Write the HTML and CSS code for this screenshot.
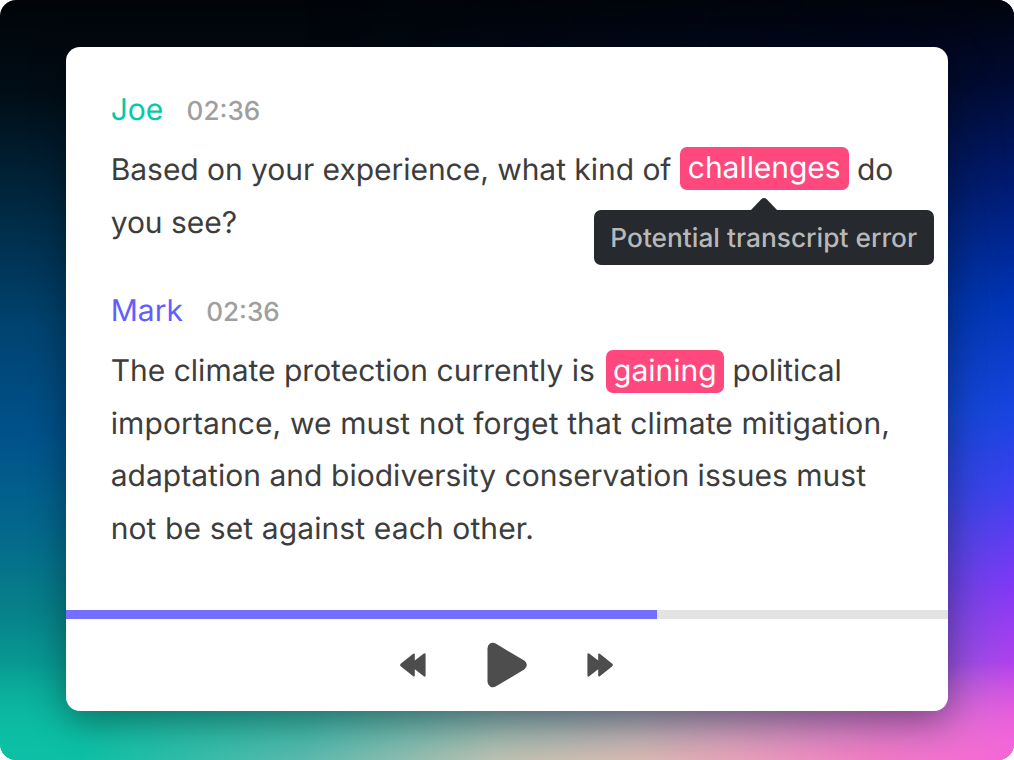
FILE: index.html
```html
<!DOCTYPE html>
<html lang="en">
<head>
    <meta charset="UTF-8">
    <meta name="viewport" content="width=device-width, initial-scale=1.0">
    <title>Transcript Player</title>
    <link rel="stylesheet" href="styles.css">
</head>
<body>

    <div class="backdrop">
        <div class="card">

            <!-- Transcript -->
            <div class="transcript">
                <section class="entry">
                    <div class="entry-header">
                        <span class="speaker joe">Joe</span>
                        <span class="time">02:36</span>
                    </div>
                    <p class="tight">Based on your experience, what kind of <span class="flag raised">challenges<span class="tooltip">Potential transcript error<svg class="arrow" width="28" height="13" viewBox="0 0 28 13"><path d="M0 13 L11 1.5 Q14 -1.4 17 1.5 L28 13 Z" fill="#26292e"/></svg></span></span> do<br>you see?</p>
                </section>

                <section class="entry">
                    <div class="entry-header">
                        <span class="speaker mark">Mark</span>
                        <span class="time">02:36</span>
                    </div>
                    <p>The climate protection currently is <span class="flag spaced">gaining</span> political<br><span class="loose">importance, we must not forget that climate mitigation,</span><br><span class="relaxed">adaptation and biodiversity conservation issues must</span><br><span class="loose">not be set against each other.</span></p>
                </section>
            </div>

            <!-- Playback progress -->
            <div class="progress">
                <div class="progress-value" style="width: 67%"></div>
            </div>

            <!-- Player controls -->
            <div class="controls">
                <svg class="skip" width="26" height="24" viewBox="0 0 26 24">
                    <path d="M1 10.4 L13.2 .8 Q14.8 -.2 14.8 1.5 V7.5 L23.5 .8 Q25.6 -.6 25.6 1.5 V22.5 Q25.6 24.4 23.8 23.2 L14.8 16.3 V22.5 Q14.8 24.2 13.2 23.2 L1 13.6 Q-.8 12 1 10.4 Z"/>
                </svg>
                <svg class="play" width="40" height="46" viewBox="0 0 40 46">
                    <path d="M.5 6.2 Q.5 3.2 3 1.6 Q5.8 0 8.7 1.6 L37.2 18.6 Q39.8 20.2 39.8 23 Q39.8 25.8 37.2 27.4 L8.7 44.6 Q5.8 46 3 44.4 Q.5 42.8 .5 39.8 Z"/>
                </svg>
                <svg class="skip forward" width="26" height="24" viewBox="0 0 26 24">
                    <path d="M1 10.4 L13.2 .8 Q14.8 -.2 14.8 1.5 V7.5 L23.5 .8 Q25.6 -.6 25.6 1.5 V22.5 Q25.6 24.4 23.8 23.2 L14.8 16.3 V22.5 Q14.8 24.2 13.2 23.2 L1 13.6 Q-.8 12 1 10.4 Z"/>
                </svg>
            </div>
        </div>
    </div>

</body>
</html>
```

FILE: styles.css
```css
* {
    box-sizing: border-box;
}

body {
    font-family: Inter, 'Liberation Sans', sans-serif;
    margin: 0;
    background-color: #fff;
    color: #3d3d3d;
    text-rendering: geometricPrecision;
}

/* Gradient frame */
.backdrop {
    position: relative;
    z-index: 0;
    width: 1013.5px;
    height: 760px;
    padding: 46.7px 66px 49px 65.7px;
    border-radius: 16px;
    overflow: hidden;
    background: linear-gradient(to bottom, #000408 0%, #000d16 12%, #002a44 28%, #004370 43%, #00518b 57%, #04688c 70%, #068089 80%, #0aa898 92%, #0bbfa3 100%);
}

.backdrop::before {
    content: '';
    position: absolute;
    inset: 0;
    z-index: -1;
    background: linear-gradient(to bottom, #00040e 0%, #000a30 10%, #00186c 23%, #0034b8 40%, #1744e0 54%, #4040f0 65%, #8038f5 77%, #b040ee 87%, #ee5fdc 98%, #f264d8 100%);
    -webkit-mask-image: linear-gradient(to right, transparent 30%, rgba(0, 0, 0, 0.8) 93%, #000 100%);
    mask-image: linear-gradient(to right, transparent 30%, rgba(0, 0, 0, 0.8) 93%, #000 100%);
}

/* Warm glow along the bottom edge */
.backdrop::after {
    content: '';
    position: absolute;
    inset: 0;
    z-index: -1;
    background: linear-gradient(to right, #0dc0a5 8%, #5cb8ae 30%, #bdc0b0 49%, #d8b8b0 63%, #e8a0b8 73%, #f07bc4 86%, #f466d8 100%);
    -webkit-mask-image: linear-gradient(to bottom, transparent 87%, #000 100%);
    mask-image: linear-gradient(to bottom, transparent 87%, #000 100%);
}

/* Card */
.card {
    display: flex;
    flex-direction: column;
    height: 100%;
    background-color: #fff;
    border-radius: 14px;
    box-shadow: 0 10px 36px rgba(0, 0, 0, 0.37);
}

.transcript {
    flex: 1;
    padding: 37.3px 45px 0;
}

.entry {
    margin-bottom: 36px;
}

.entry-header {
    display: flex;
    align-items: baseline;
    gap: 23.3px;
    height: 60px;
    line-height: 52.5px;
}

.speaker {
    font-size: 30px;
}

.joe {
    color: #00cba6;
}

.mark {
    color: #625dff;
}

.time {
    font-size: 26.1px;
    font-weight: 500;
    color: #9f9f9f;
}

.entry p {
    margin: 0;
    font-size: 30px;
    line-height: 52.6px;
    white-space: nowrap;
}

.tight {
    letter-spacing: -0.04px;
}

.loose {
    letter-spacing: 0.11px;
}

.relaxed {
    letter-spacing: 0.03px;
}

/* Flagged words */
.flag {
    position: relative;
    display: inline-block;
    height: 43px;
    padding: 0 8px;
    border-radius: 7px;
    background-color: #ff487d;
    color: #fff;
    line-height: 43px;
}

.raised {
    top: -2px;
}

.spaced {
    margin-left: 2.5px;
    padding: 0 7.3px;
}

.tooltip {
    position: absolute;
    top: 63.5px;
    left: 50%;
    width: 340px;
    height: 55px;
    margin-left: -170.5px;
    border-radius: 7px;
    background-color: #26292e;
    color: #b8b8b8;
    font-size: 26.3px;
    font-weight: 500;
    letter-spacing: 0;
    line-height: 57px;
    text-align: center;
}

.arrow {
    position: absolute;
    top: -12px;
    left: 156px;
}

/* Progress bar */
.progress {
    height: 8.8px;
    background-color: #e3e3e3;
}

.progress-value {
    height: 100%;
    background-color: #746fff;
}

/* Controls */
.controls {
    display: flex;
    justify-content: center;
    align-items: center;
    gap: 60.5px;
    height: 92.5px;
    fill: #4d4d4d;
}

.forward {
    transform: scaleX(-1);
}
```
